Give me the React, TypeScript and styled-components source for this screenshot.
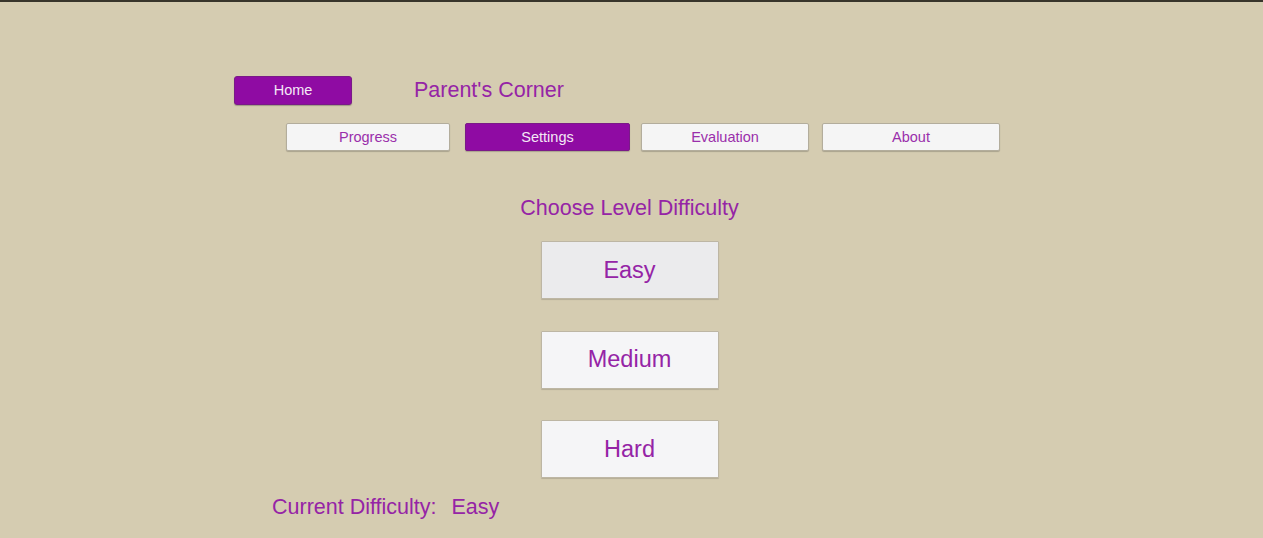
import * as React from 'react'
import styled, { createGlobalStyle } from 'styled-components'

const GlobalStyle = createGlobalStyle`
  html, body {
    margin: 0;
    padding: 0;
    background: #d5ccb1;
    font-family: 'Liberation Sans', Arial, sans-serif;
  }
`

const Page = styled.div`
  width: 1263px;
  height: 538px;
  overflow: hidden;
  background: #d5ccb1;
  border-top: 2px solid #38352b;
  box-sizing: border-box;
  display: flex;
  flex-direction: column;
`

const Header = styled.div`
  display: flex;
  align-items: center;
  margin-top: 73px;
  padding-left: 234px;
  gap: 62px;
`

const HomeButton = styled.button`
  width: 118px;
  height: 29px;
  background: #8f0ba3;
  color: #f4e8f6;
  border: 1px solid #7a1a88;
  border-radius: 3px;
  font-family: inherit;
  font-size: 14.5px;
  box-shadow: 0 1px 1px rgba(0, 0, 0, 0.25);
  cursor: pointer;
`

const Title = styled.h1`
  margin: 2px 0 2px;
  font-size: 21.5px;
  line-height: 26px;
  font-weight: normal;
  color: #9524a6;
`

const Tabs = styled.div`
  display: flex;
  margin-top: 18px;
  padding-left: 286px;
`

const Tab = styled.button<{ $active?: boolean; $w: number; $gap: number }>`
  width: ${p => p.$w}px;
  height: 28px;
  margin-right: ${p => p.$gap}px;
  background: ${p => (p.$active ? '#8f0ba3' : '#f5f5f5')};
  color: ${p => (p.$active ? '#f4e8f6' : '#9a2fab')};
  border: 1px solid ${p => (p.$active ? '#7a1a88' : '#b3ad9c')};
  border-radius: 2px;
  font-family: inherit;
  font-size: 14.5px;
  box-shadow: 0 1px 1px rgba(0, 0, 0, 0.2);
  cursor: pointer;
`

const Difficulty = styled.div`
  display: flex;
  flex-direction: column;
  align-items: center;
  padding-right: 4px;
  margin-top: 45px;
`

const SectionTitle = styled.h2`
  margin: 0 0 20px;
  font-size: 21.5px;
  line-height: 25px;
  font-weight: normal;
  color: #9524a6;
`

const Choices = styled.div`
  display: flex;
  flex-direction: column;
  gap: 31.5px;
`

const Choice = styled.button<{ $selected?: boolean }>`
  width: 178px;
  height: 58px;
  background: ${p => (p.$selected ? '#ebebed' : '#f5f5f7')};
  color: #9524a6;
  border: 1px solid #bdb6a4;
  border-radius: 1px;
  font-family: inherit;
  font-size: 23.5px;
  box-shadow: 0 1px 1px rgba(0, 0, 0, 0.15);
  cursor: pointer;
`

const Current = styled.div`
  display: flex;
  gap: 15px;
  margin-top: 16px;
  padding-left: 272px;
  font-size: 21.5px;
  line-height: 26px;
  color: #9524a6;
`

const tabs = [
  { label: 'Progress', w: 164, gap: 15 },
  { label: 'Settings', w: 165, gap: 11, active: true },
  { label: 'Evaluation', w: 168, gap: 13 },
  { label: 'About', w: 178, gap: 0 }
]

const levels = ['Easy', 'Medium', 'Hard']

const App: React.FC = () => {
  const [level, setLevel] = React.useState('Easy')
  return (
    <Page>
      <GlobalStyle />
      <Header>
        <HomeButton>Home</HomeButton>
        <Title>Parent's Corner</Title>
      </Header>
      <Tabs>
        {tabs.map(t => (
          <Tab key={t.label} $w={t.w} $gap={t.gap} $active={t.active}>
            {t.label}
          </Tab>
        ))}
      </Tabs>
      <Difficulty>
        <SectionTitle>Choose Level Difficulty</SectionTitle>
        <Choices>
          {levels.map(l => (
            <Choice key={l} $selected={l === level} onClick={() => setLevel(l)}>
              {l}
            </Choice>
          ))}
        </Choices>
      </Difficulty>
      <Current>
        <span>Current Difficulty:</span>
        <span>{level}</span>
      </Current>
    </Page>
  )
}

export default App
